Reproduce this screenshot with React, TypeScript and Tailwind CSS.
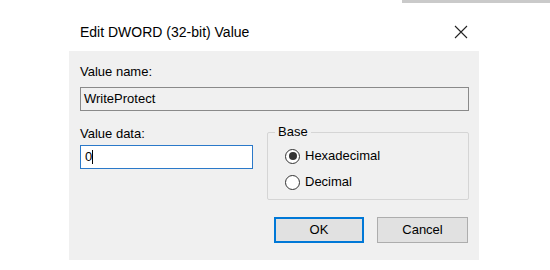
import React from "react";

// Windows registry "Edit DWORD" dialog
const Radio: React.FC<{ checked?: boolean; label: string }> = ({ checked, label }) => (
  <div className="flex items-center h-[20px]">
    <span className="w-[15px] h-[15px] rounded-full border border-[#333333] bg-white flex items-center justify-center">
      {checked && <span className="w-[8px] h-[8px] rounded-full bg-[#333333]" />}
    </span>
    <span className="ml-[5px]">{label}</span>
  </div>
);

const App: React.FC = () => {
  return (
    <div
      className="w-[550px] h-[270px] bg-white text-[13px] text-black overflow-hidden"
      style={{ fontFamily: '"Liberation Sans", Arial, sans-serif' }}
    >
      {/* other window edge */}
      <div className="ml-[402px] h-[3px] bg-[#cacaca]" />

      <div className="ml-[69px] w-[410px]">
        {/* title bar */}
        <div className="h-[48px] flex items-end justify-between pb-[11px] pl-[11px] pr-[10px]">
          <span className="text-[14px] leading-[16px]">Edit DWORD (32-bit) Value</span>
          <svg width="14" height="14" viewBox="0 0 14 14" className="mb-[1px] mr-[1px]">
            <path d="M1 1 L13 13 M13 1 L1 13" stroke="#222" strokeWidth="1.1" />
          </svg>
        </div>

        {/* body */}
        <div className="h-[209px] bg-[#f0f0f0] pl-[11px] pr-[10px] pt-[13px]">
          <div className="leading-[16px]">Value name:</div>
          <div className="mt-[7px] h-[24px] border border-[#8a8a8a] bg-[#f0f0f0] px-[3px] flex items-center">
            WriteProtect
          </div>

          <div className="flex mt-[12px]">
            <div className="w-[173px]">
              <div className="leading-[16px] mt-[3px]">Value data:</div>
              <div className="mt-[3px] h-[24px] border border-[#2b79c9] bg-white px-[4px] flex items-center">
                0<span className="w-px h-[14px] bg-black" />
              </div>
            </div>

            <div className="ml-[14px] flex-1 relative mt-[9px] h-[68px] border border-[#d5d5d5] rounded-[2px] pl-[17px] pt-[13px]">
              <span className="absolute -top-[9px] left-[7px] px-[3px] bg-[#f0f0f0] leading-[16px]">Base</span>
              <Radio checked label="Hexadecimal" />
              <div className="mt-[6px]">
                <Radio label="Decimal" />
              </div>
            </div>
          </div>

          <div className="flex justify-end mt-[17px] gap-[13px]">
            <button className="w-[90px] h-[26px] bg-[#e1e1e1] border-2 border-[#0078d7]">OK</button>
            <button className="w-[91px] h-[26px] bg-[#e1e1e1] border border-[#adadad] mr-[1px]">Cancel</button>
          </div>
        </div>
      </div>
    </div>
  );
};

export default App;
